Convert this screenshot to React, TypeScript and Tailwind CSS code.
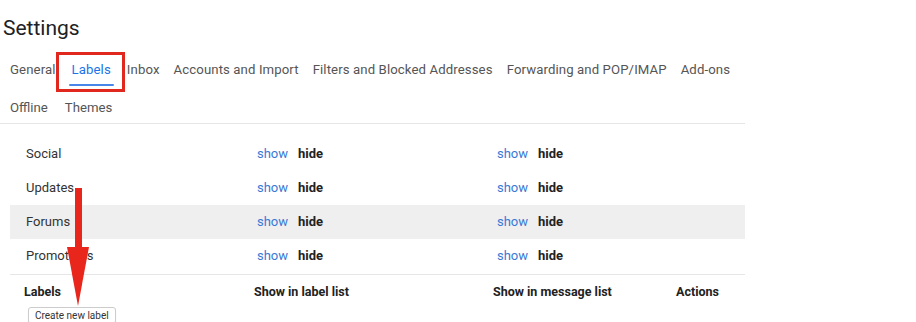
import React from "react";

const tabs1 = [
  "General",
  "Labels",
  "Inbox",
  "Accounts and Import",
  "Filters and Blocked Addresses",
  "Forwarding and POP/IMAP",
  "Add-ons",
];

const rows = ["Social", "Updates", "Forums", "Promotions"];

function ShowHide() {
  return (
    <div className="flex items-center gap-[10px]">
      <span className="text-[#3a78d6]">show</span>
      <span className="font-bold text-[#222]">hide</span>
    </div>
  );
}

export default function App() {
  return (
    <div
      className="relative w-[916px] h-[322px] overflow-hidden bg-white text-[#222]"
      style={{ fontFamily: "Roboto, 'Liberation Sans', sans-serif" }}
    >
      <div className="w-[745px]">
        <div className="pl-[3px] pt-[15px] h-[48px] text-[21px] leading-[26px] text-[#202124]">
          Settings
        </div>
        <div className="border-b border-[#e6e6e6] bg-white">
          <div className="flex items-center h-[44px] pl-[10px] gap-[14px] text-[13.2px] text-[#555] tracking-[0.1px]">
            {tabs1.map((t) =>
              t === "Labels" ? (
                <div key={t} className="relative h-full flex items-center">
                  <span className="text-[#1a73e8] px-[2px]">{t}</span>
                  <div className="absolute left-[-1px] right-[-1px] bottom-[6px] h-[2px] bg-[#4a86e8] rounded" />
                  <div className="absolute left-[-14px] right-[-12px] top-[4px] bottom-[0px] border-[3px] border-[#e0281e]" />
                </div>
              ) : (
                <span key={t}>{t}</span>
              )
            )}
          </div>
          <div className="flex items-center h-[31px] pl-[10px] gap-[17px] text-[13.2px] text-[#555]">
            <span>Offline</span>
            <span>Themes</span>
          </div>
        </div>
        <div className="pl-[10px] pt-[13px] text-[13px]">
          {rows.map((r) => (
            <div
              key={r}
              className={`grid grid-cols-[231px_240px_1fr] items-center h-[34px] pl-[16px] ${
                r === "Forums" ? "bg-[#efefef]" : ""
              }`}
            >
              <span className="text-[#333]">{r}</span>
              <ShowHide />
              <ShowHide />
            </div>
          ))}
          <div className="border-t border-[#e6e6e6] mt-[1px]">
            <div className="grid grid-cols-[230px_239px_183px_1fr] items-center h-[34px] pl-[14px] text-[12.5px] font-bold text-[#222]">
              <span>Labels</span>
              <span>Show in label list</span>
              <span>Show in message list</span>
              <span>Actions</span>
            </div>
            <div className="pl-[18px] -mt-[4px]">
              <button className="h-[17px] px-[6px] text-[10px] leading-[15px] text-[#333] border border-[#ccc] rounded-[3px] bg-white shadow-[0_1px_1px_rgba(0,0,0,0.08)]">
                Create new label
              </button>
            </div>
          </div>
        </div>
      </div>
      <svg
        className="absolute left-[64px] top-[186px]"
        width="28"
        height="124"
        viewBox="0 0 28 124"
      >
        <rect x="11" y="2" width="7" height="62" fill="#e8261b" />
        <polygon points="3,61 25,61 14,120" fill="#e8261b" />
      </svg>
    </div>
  );
}
